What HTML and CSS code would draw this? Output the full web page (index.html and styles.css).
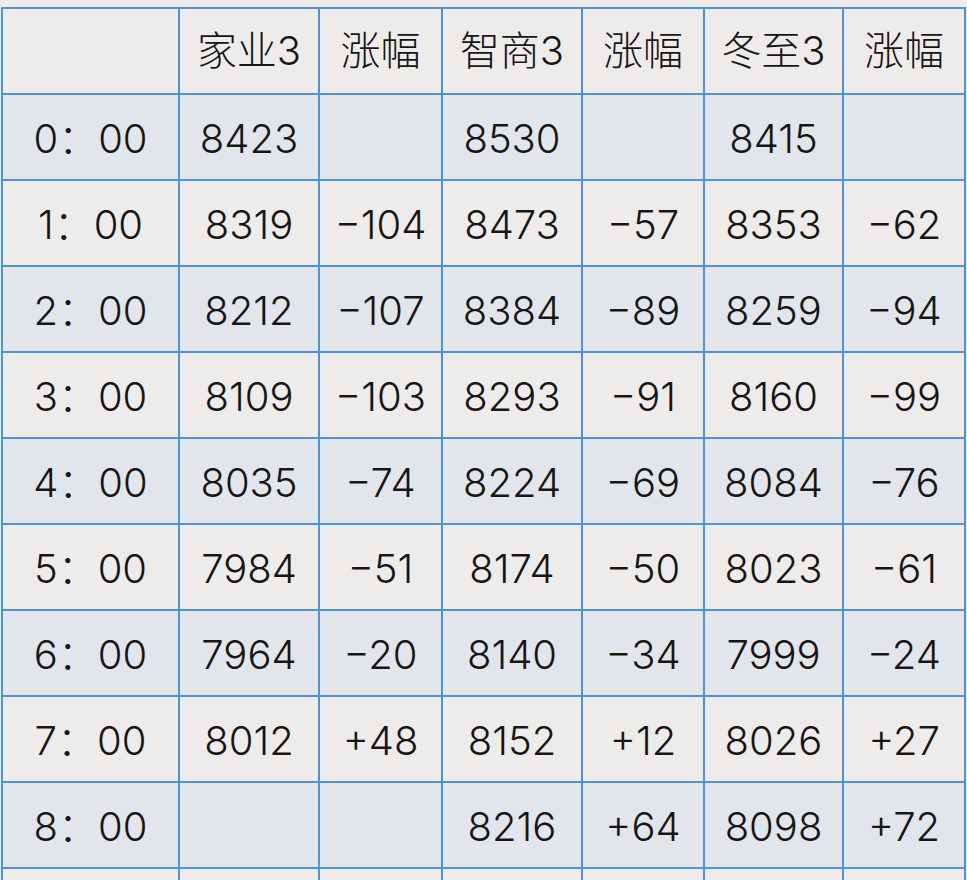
FILE: index.html
```html
<!DOCTYPE html>
<html lang="zh">
<head>
<meta charset="utf-8">
<title>涨幅表</title>
<link rel="stylesheet" href="styles.css">
</head>
<body>
<table class="grid">
  <colgroup>
    <col class="c-time">
    <col class="c-val">
    <col class="c-chg">
    <col class="c-val2">
    <col class="c-chg2">
    <col class="c-val3">
    <col class="c-chg3">
  </colgroup>
  <thead>
    <tr class="light">
      <th></th><th>家业3</th><th>涨幅</th><th>智商3</th><th>涨幅</th><th>冬至3</th><th>涨幅</th>
    </tr>
  </thead>
  <tbody>
    <tr class="blue"><td>0：00</td><td>8423</td><td></td><td>8530</td><td></td><td>8415</td><td></td></tr>
    <tr class="light"><td>1：00</td><td>8319</td><td>−104</td><td>8473</td><td>−57</td><td>8353</td><td>−62</td></tr>
    <tr class="blue"><td>2：00</td><td>8212</td><td>−107</td><td>8384</td><td>−89</td><td>8259</td><td>−94</td></tr>
    <tr class="light"><td>3：00</td><td>8109</td><td>−103</td><td>8293</td><td>−91</td><td>8160</td><td>−99</td></tr>
    <tr class="blue"><td>4：00</td><td>8035</td><td>−74</td><td>8224</td><td>−69</td><td>8084</td><td>−76</td></tr>
    <tr class="light"><td>5：00</td><td>7984</td><td>−51</td><td>8174</td><td>−50</td><td>8023</td><td>−61</td></tr>
    <tr class="blue"><td>6：00</td><td>7964</td><td>−20</td><td>8140</td><td>−34</td><td>7999</td><td>−24</td></tr>
    <tr class="light"><td>7：00</td><td>8012</td><td>+48</td><td>8152</td><td>+12</td><td>8026</td><td>+27</td></tr>
    <tr class="blue"><td>8：00</td><td></td><td></td><td>8216</td><td>+64</td><td>8098</td><td>+72</td></tr>
    <tr class="light"><td></td><td></td><td></td><td></td><td></td><td></td><td></td></tr>
  </tbody>
</table>
</body>
</html>
```
FILE: styles.css
```css
html, body {
  margin: 0;
  padding: 0;
  background: #eeedeb;
  overflow: hidden;
}

body {
  padding: 7px 0 0 1px;
  font-family: Inter, "Noto Sans CJK SC", sans-serif;
  color: #161616;
}

.grid {
  border-collapse: collapse;
  table-layout: fixed;
}

.c-time { width: 177px; }
.c-val  { width: 140px; }
.c-chg  { width: 123px; }
.c-val2 { width: 140px; }
.c-chg2 { width: 122px; }
.c-val3 { width: 139px; }
.c-chg3 { width: 122px; }

.grid th,
.grid td {
  border: 2px solid #4f93d6;
  text-align: center;
  vertical-align: middle;
  font-size: 40px;
  font-weight: 300;
  line-height: 1;
  white-space: nowrap;
}

.grid th {
  height: 84px;
  padding: 0;
}

.grid td {
  height: 81px;
  padding: 3px 0 0;
}

.light { background: #eeecea; }
.blue  { background: #e2e6ea; }
```
